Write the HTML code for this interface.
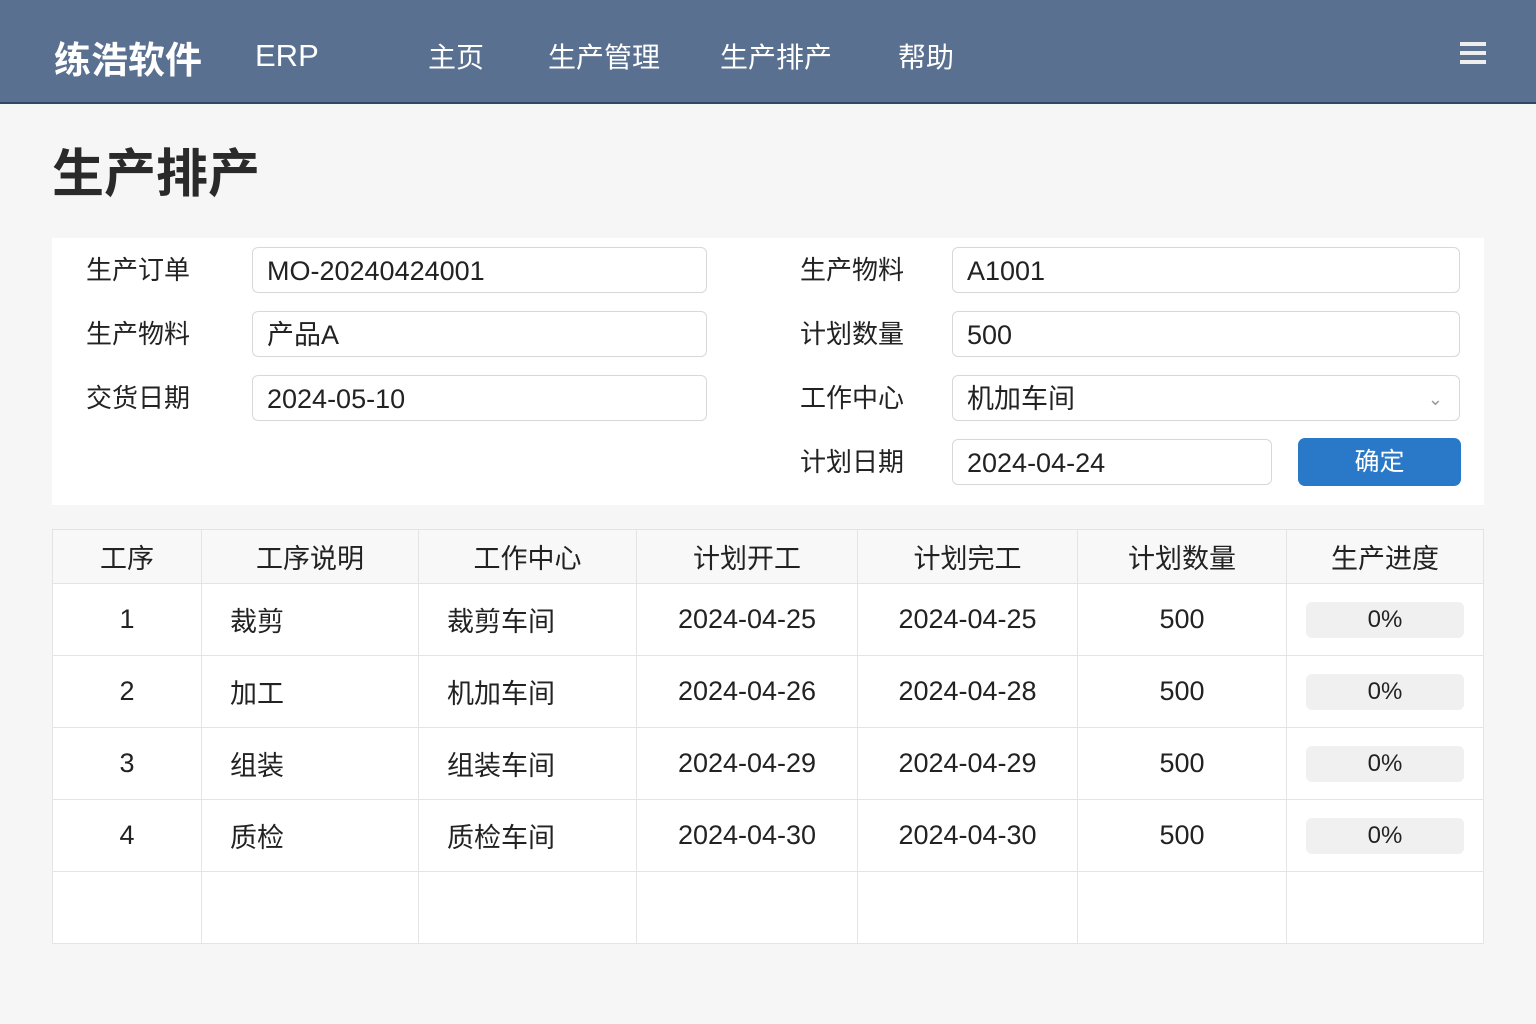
<!DOCTYPE html>
<html><head><meta charset="utf-8"><style>
*{margin:0;padding:0;box-sizing:border-box}
body{width:1536px;height:1024px;background:#f6f6f6;font-family:"Liberation Sans","Noto Sans CJK SC",sans-serif;color:#222;position:relative;overflow:hidden}
.a{position:absolute}
.hdr{left:0;top:0;width:1536px;height:104px;background:#5a7090;border-bottom:2px solid #2f4766}
.nav{color:#fff;font-size:28px;top:36px}
.lbl{font-size:26px;color:#222}
.inp{background:#fff;border:1px solid #d8d8d8;border-radius:6px;font-size:27px;padding-left:14px;line-height:46px;height:46px}
table{position:absolute;left:52px;top:529px;width:1432px;border-collapse:collapse;background:#fff;font-size:27px}
td,th{border:1px solid #e4e4e4;text-align:center;font-weight:normal}
th{height:54px;background:#f8f8f8}
td{height:72px}
.l{text-align:left;padding-left:28px}
.pg{display:inline-block;width:158px;height:36px;line-height:36px;background:#f0f0f0;border-radius:6px;font-size:24px}
</style></head><body>
<div class="a hdr"></div>
<div class="a" style="left:54px;top:30px;color:#fff;font-size:37px;font-weight:bold">练浩软件</div>
<div class="a nav" style="left:255px;top:38px;font-size:31px">ERP</div>
<div class="a nav" style="left:428px;top:36px">主页</div>
<div class="a nav" style="left:548px;top:36px">生产管理</div>
<div class="a nav" style="left:720px;top:36px">生产排产</div>
<div class="a nav" style="left:898px;top:36px">帮助</div>
<div class="a" style="left:1460px;top:42px;width:26px;height:4px;background:#eee;box-shadow:0 9px 0 #eee,0 18px 0 #eee"></div>
<div class="a" style="left:52px;top:132px;font-size:52px;font-weight:bold;color:#2a2a2a">生产排产</div>
<div class="a" style="left:52px;top:238px;width:1432px;height:267px;background:#fff"></div>
<div class="a lbl" style="left:86px;top:250px">生产订单</div>
<div class="a lbl" style="left:86px;top:314px">生产物料</div>
<div class="a lbl" style="left:86px;top:378px">交货日期</div>
<div class="a inp" style="left:252px;top:247px;width:455px">MO-20240424001</div>
<div class="a inp" style="left:252px;top:311px;width:455px">产品A</div>
<div class="a inp" style="left:252px;top:375px;width:455px">2024-05-10</div>
<div class="a lbl" style="left:800px;top:250px">生产物料</div>
<div class="a lbl" style="left:800px;top:314px">计划数量</div>
<div class="a lbl" style="left:800px;top:378px">工作中心</div>
<div class="a lbl" style="left:800px;top:442px">计划日期</div>
<div class="a inp" style="left:952px;top:247px;width:508px">A1001</div>
<div class="a inp" style="left:952px;top:311px;width:508px">500</div>
<div class="a inp" style="left:952px;top:375px;width:508px">机加车间<span style="position:absolute;right:16px;top:0;color:#999;font-size:18px">⌄</span></div>
<div class="a inp" style="left:952px;top:439px;width:320px">2024-04-24</div>
<div class="a" style="left:1298px;top:438px;width:163px;height:48px;background:#2a78c8;border-radius:7px;color:#fff;font-size:25px;text-align:center;line-height:48px">确定</div>
<table>
<tr><th style="width:149px">工序</th><th style="width:217px">工序说明</th><th style="width:218px">工作中心</th><th style="width:221px">计划开工</th><th style="width:220px">计划完工</th><th style="width:209px">计划数量</th><th>生产进度</th></tr>
<tr><td>1</td><td class="l">裁剪</td><td class="l">裁剪车间</td><td>2024-04-25</td><td>2024-04-25</td><td>500</td><td><span class="pg">0%</span></td></tr>
<tr><td>2</td><td class="l">加工</td><td class="l">机加车间</td><td>2024-04-26</td><td>2024-04-28</td><td>500</td><td><span class="pg">0%</span></td></tr>
<tr><td>3</td><td class="l">组装</td><td class="l">组装车间</td><td>2024-04-29</td><td>2024-04-29</td><td>500</td><td><span class="pg">0%</span></td></tr>
<tr><td>4</td><td class="l">质检</td><td class="l">质检车间</td><td>2024-04-30</td><td>2024-04-30</td><td>500</td><td><span class="pg">0%</span></td></tr>
<tr><td></td><td></td><td></td><td></td><td></td><td></td><td></td></tr>
</table>
</body></html>
